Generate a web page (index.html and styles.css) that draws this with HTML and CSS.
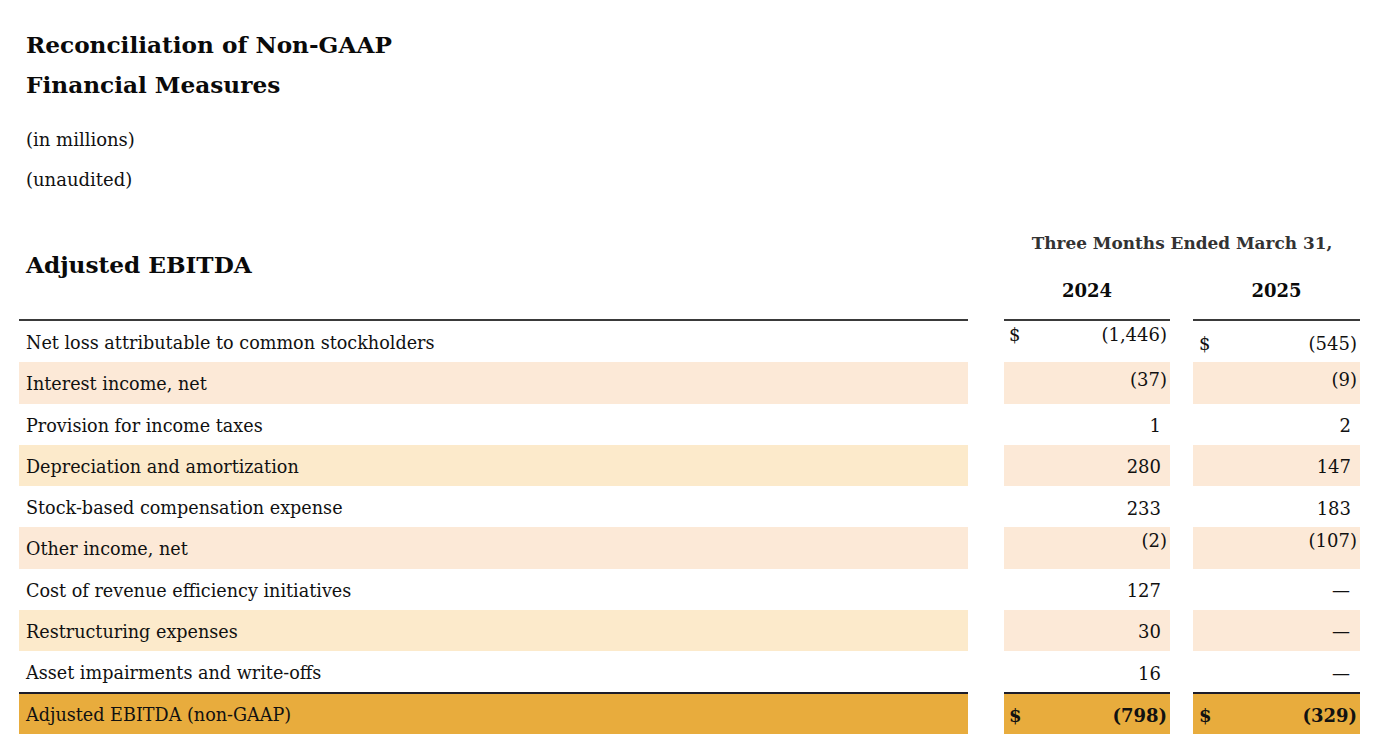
FILE: index.html
```html
<!DOCTYPE html>
<html lang="en">
<head>
<meta charset="utf-8">
<title>Reconciliation of Non-GAAP Financial Measures</title>
<link rel="stylesheet" href="styles.css">
</head>
<body>
<main class="page">
  <h1 class="title">Reconciliation of Non-GAAP<br>Financial Measures</h1>
  <p class="note">(in millions)</p>
  <p class="note">(unaudited)</p>

  <div class="table">
    <div class="head">
      <h2 class="section">Adjusted EBITDA</h2>
      <div class="period">
        <div class="period-title">Three Months Ended March 31,</div>
        <div class="years">
          <div class="year">2024</div>
          <div class="year">2025</div>
        </div>
      </div>
    </div>

    <div class="row first">
      <div class="label">Net loss attributable to common stockholders</div>
      <div class="val c1 up7"><span class="cur">$</span><span>(1,446)</span></div>
      <div class="val c2 par"><span class="cur">$</span><span>(545)</span></div>
    </div>
    <div class="row peach">
      <div class="label">Interest income, net</div>
      <div class="val c1 par up4"><span>(37)</span></div>
      <div class="val c2 par up4"><span>(9)</span></div>
    </div>
    <div class="row">
      <div class="label">Provision for income taxes</div>
      <div class="val c1 pos"><span>1</span></div>
      <div class="val c2 pos"><span>2</span></div>
    </div>
    <div class="row cream">
      <div class="label">Depreciation and amortization</div>
      <div class="val c1 pos"><span>280</span></div>
      <div class="val c2 pos"><span>147</span></div>
    </div>
    <div class="row">
      <div class="label">Stock-based compensation expense</div>
      <div class="val c1 pos"><span>233</span></div>
      <div class="val c2 pos"><span>183</span></div>
    </div>
    <div class="row peach">
      <div class="label">Other income, net</div>
      <div class="val c1 par up7"><span>(2)</span></div>
      <div class="val c2 par up7"><span>(107)</span></div>
    </div>
    <div class="row">
      <div class="label">Cost of revenue efficiency initiatives</div>
      <div class="val c1 pos"><span>127</span></div>
      <div class="val c2 dash"><span>—</span></div>
    </div>
    <div class="row cream">
      <div class="label">Restructuring expenses</div>
      <div class="val c1 pos"><span>30</span></div>
      <div class="val c2 dash"><span>—</span></div>
    </div>
    <div class="row">
      <div class="label">Asset impairments and write-offs</div>
      <div class="val c1 pos"><span>16</span></div>
      <div class="val c2 dash"><span>—</span></div>
    </div>
    <div class="row total">
      <div class="label">Adjusted EBITDA (non-GAAP)</div>
      <div class="val c1 par"><span class="cur">$</span><span>(798)</span></div>
      <div class="val c2 par"><span class="cur">$</span><span>(329)</span></div>
    </div>
  </div>
</main>
</body>
</html>
```

FILE: styles.css
```css
* { box-sizing: border-box; }

html, body {
  margin: 0;
  padding: 0;
  background: #ffffff;
}

body {
  font-family: "DejaVu Serif", "Liberation Serif", serif;
  color: #111111;
}

.page {
  padding: 25px 34px 0 19px;
}

.title {
  margin: 0;
  padding-left: 7px;
  font-size: 23.2px;
  line-height: 40px;
  font-weight: 700;
  color: #0a0a0a;
}

.note {
  margin: 0;
  padding-left: 7px;
  font-size: 18px;
  line-height: 40px;
}

.title + .note {
  margin-top: 15px;
}

.table {
  width: 1341px;
}

.head {
  display: grid;
  grid-template-columns: 949px 36px 166px 23px 167px;
  height: 121px;
}

.section {
  grid-column: 1;
  margin: 0;
  padding: 50px 0 0 7px;
  font-size: 23.2px;
  line-height: 30px;
  font-weight: 700;
  color: #0a0a0a;
  border-bottom: 2px solid #3a3a3a;
  align-self: stretch;
}

.period {
  grid-column: 3 / 6;
  display: flex;
  flex-direction: column;
}

.period-title {
  margin-top: 28px;
  text-align: center;
  font-size: 16.9px;
  line-height: 30px;
  font-weight: 700;
  color: #333333;
}

.years {
  margin-top: 18px;
  display: grid;
  grid-template-columns: 166px 23px 167px;
  flex: 1;
}

.year {
  text-align: center;
  font-size: 18px;
  line-height: 30px;
  font-weight: 700;
  border-bottom: 2px solid #3a3a3a;
  color: #0a0a0a;
}

.year + .year {
  grid-column: 3;
}

.row {
  display: grid;
  grid-template-columns: 949px 36px 166px 23px 167px;
  height: 41.25px;
  font-size: 17.6px;
}

.label {
  grid-column: 1;
  display: flex;
  align-items: center;
  padding: 3px 0 0 7px;
}

.val {
  display: flex;
  align-items: center;
  justify-content: space-between;
  padding: 3px 10px 0 5px;
  font-size: 18px;
}

.val span:last-child {
  margin-left: auto;
}

.c1 { grid-column: 3; }
.c2 { grid-column: 5; padding-left: 6px; }

.par { padding-right: 3px; }
.c1.up7 { padding-right: 3px; }
.pos { padding-right: 9px; }
.dash { padding-right: 10px; }

.up4 { padding-bottom: 6px; padding-top: 0; }
.up7 { padding-bottom: 14px; padding-top: 0; }

.peach .label,
.peach .val,
.cream .val {
  background: #fce9d7;
}

.cream .label {
  background: #fceacb;
}

.total .label,
.total .val {
  background: #e8ac3d;
  border-top: 2px solid #1c1c2a;
}

.total .val {
  font-weight: 700;
}
```
